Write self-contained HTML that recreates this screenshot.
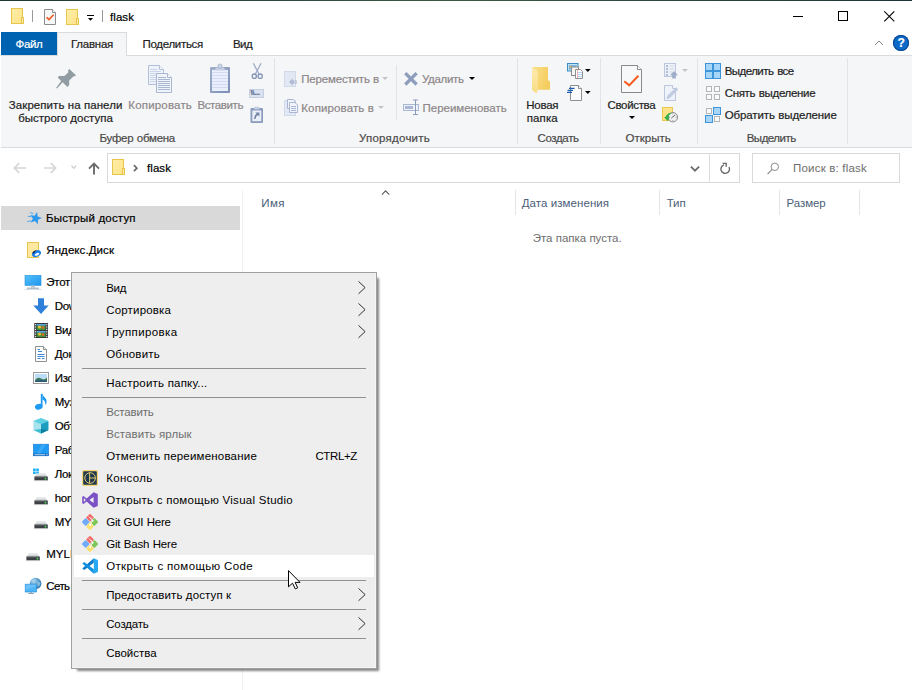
<!DOCTYPE html>
<html lang="ru"><head><meta charset="utf-8"><title>flask</title>
<style>
html,body{margin:0;padding:0;background:#fff;overflow:hidden}
body{width:912px;height:690px;position:relative;font-family:"Liberation Sans",sans-serif;font-size:12px;color:#000}
.t{position:absolute;white-space:nowrap;line-height:14px;font-size:12px;-webkit-text-stroke:0.2px}
.a{position:absolute}
svg{position:absolute;overflow:visible}
</style></head><body>
<!-- window chrome -->
<div class="a" style="left:0;top:0;width:912px;height:1px;background:linear-gradient(90deg,#1e3834,#2c4a3c 30%,#3a5a45 50%,#2a473c 75%,#1b3638)"></div>
<!-- tabs row -->
<div class="a" style="left:1px;top:32px;width:56px;height:23px;background:#0063b1"></div>
<div class="a" style="left:1px;top:55px;width:911px;height:1px;background:#dadbdc"></div>
<div class="a" style="left:57px;top:32px;width:70px;height:24px;background:#f5f6f7;border:1px solid #dadbdc;border-bottom:none;box-sizing:border-box"></div>
<!-- ribbon -->
<div class="a" style="left:1px;top:56px;width:911px;height:91px;background:#f5f6f7"></div>
<div class="a" style="left:1px;top:147px;width:911px;height:1px;background:#dadbdc"></div>
<!-- group separators -->
<div class="a" style="left:274px;top:58px;width:1px;height:86px;background:#e2e3e4"></div>
<div class="a" style="left:396px;top:65px;width:1px;height:55px;background:#e2e3e4"></div>
<div class="a" style="left:517px;top:58px;width:1px;height:86px;background:#e2e3e4"></div>
<div class="a" style="left:600px;top:58px;width:1px;height:86px;background:#e2e3e4"></div>
<div class="a" style="left:697px;top:58px;width:1px;height:86px;background:#e2e3e4"></div>
<div class="a" style="left:847px;top:58px;width:1px;height:86px;background:#e2e3e4"></div>
<!-- pin -->
<svg style="left:50px;top:62px" width="34" height="32" viewBox="50 62 34 32">
<path d="M69.3 69L76.2 75.6L73.4 76.6L69.2 80.6L69.2 85L67.4 87L62.6 82.2L57 88.6L56.2 87.8L61.2 81L57.8 77.6L59 76L64.4 76L68.2 72.4L68.2 70.2Z" fill="#929da3"/>
</svg>
<!-- copy -->
<svg style="left:147px;top:64px" width="26" height="30" viewBox="147 64 26 30">
<path d="M148.5 65.5H159.500L163.5 69.500V84.5H148.5Z" fill="#edf2fb" stroke="#b1bfd9"/>
<path d="M159.500 65.5V69.500H163.5" fill="#f6f9fe" stroke="#b1bfd9"/>
<path d="M150 69.5H157M150 71.5H161M150 73.5H161M150 75.5H161M150 77.5H161M150 79.5H161M150 81.5H161" stroke="#cdd6e8" stroke-width="1"/>
<path d="M156.5 73.5H167.500L171.5 77.500V92.5H156.5Z" fill="#eef3fc" stroke="#a9b7d3"/>
<path d="M167.500 73.5V77.500H171.5" fill="#f6f9fe" stroke="#a9b7d3"/>
<path d="M158 77.5H166M158 79.5H170M158 81.5H170M158 83.5H170M158 85.5H170M158 87.5H170M158 89.5H170" stroke="#a9b6d0" stroke-width="1"/>
</svg>
<!-- paste -->
<svg style="left:209px;top:63px" width="22" height="31" viewBox="209 63 22 31">
<defs><linearGradient id="pb" x1="0" y1="0" x2="1" y2="1"><stop offset="0" stop-color="#a2b0cd"/><stop offset="1" stop-color="#7b8eb5"/></linearGradient></defs>
<rect x="210" y="67" width="20" height="26" rx="1" fill="url(#pb)"/>
<rect x="212" y="70" width="16" height="21" fill="#e9effc"/>
<path d="M212 72.500H228M212 75.500H228M212 78.500H228M212 81.500H228M212 84.500H228M212 87.500H228" stroke="#d2dbf0" stroke-width="1"/>
<path d="M213.800 70.600L216.500 67.600H223.500L226.200 70.600Z" fill="#c5cfe4"/>
<rect x="218" y="64.200" width="4" height="4" rx="1.500" fill="#cdd6e8" stroke="#9eacc9" stroke-width="0.800"/>
</svg>
<!-- scissors -->
<svg style="left:250px;top:62px" width="15" height="18" viewBox="250 62 15 18">
<path d="M253.300 63.200L259 74M261 63.200L255.400 74" stroke="#9dabc7" stroke-width="1.300" fill="none"/>
<ellipse cx="254.300" cy="76.200" rx="2.100" ry="2.200" fill="none" stroke="#8495b8" stroke-width="1.300"/>
<ellipse cx="260.200" cy="76.200" rx="2.100" ry="2.200" fill="none" stroke="#8495b8" stroke-width="1.300"/>
</svg>
<!-- copy path -->
<div class="a" style="left:249px;top:89px;width:15px;height:9px;background:#dae1ef;border:1px solid #c6cfe2;box-sizing:border-box"></div>
<span class="t" style="left:250.5px;top:87.5px;font-size:8px;line-height:10px;color:#5c6d92;font-weight:bold;letter-spacing:-0.4px">\\...</span>
<!-- paste shortcut -->
<svg style="left:250px;top:106px" width="14" height="18" viewBox="250 106 14 18">
<rect x="250.5" y="108" width="12.5" height="15" rx="1" fill="#8b9bbd"/>
<rect x="252.3" y="110.5" width="9" height="10.7" fill="#e9eef7"/>
<rect x="254" y="106.8" width="5.5" height="2.6" rx="1" fill="#c3cde2"/>
<path d="M255.400 112.400H259.400V116.400Z" fill="#7383a6"/><path d="M257.800 114Q254.800 115.400 254.800 118.900" stroke="#7383a6" stroke-width="1.600" fill="none"/>
</svg>
<!-- move to -->
<svg style="left:284px;top:71px" width="14" height="16" viewBox="284 71 14 16">
<rect x="284.5" y="71.5" width="11" height="15" fill="#e3e9f4" stroke="#d2daea"/>
<path d="M296.8 80.2V83.8H292.6V85.8L289 82L292.6 78.2V80.2Z" fill="#aebbd3"/>
<path d="M294.5 80.2V83.8M296 80.2V83.8" stroke="#e3e9f4" stroke-width="0.6"/>
</svg>
<svg style="left:382px;top:77px" width="6" height="4" viewBox="0 0 6 4"><path d="M0 0H6L3 3Z" fill="#c3c3c3"/></svg>
<!-- copy to -->
<svg style="left:284px;top:99px" width="14" height="17" viewBox="284 99 14 17">
<rect x="284.5" y="100.5" width="11" height="15" fill="#e3e9f4" stroke="#d2daea"/>
<path d="M287.5 99.5H293.2L295.5 101.8V108.5H287.5Z" fill="#f1f4fa" stroke="#a9b7d3"/>
<path d="M289.5 102.5H295L297.5 105V112.500H289.5Z" fill="#f1f4fa" stroke="#a9b7d3"/>
<path d="M291 106.5H296M291 108.5H296M291 110.5H296" stroke="#a9b6d0"/>
</svg>
<svg style="left:377.500px;top:106px" width="6" height="4" viewBox="0 0 6 4"><path d="M0 0H6L3 3Z" fill="#c3c3c3"/></svg>
<!-- delete X -->
<svg style="left:403px;top:71px" width="16" height="16" viewBox="403 71 16 16">
<path d="M405.300 73.200L416.600 84.500M416.600 73.200L405.300 84.500" stroke="#8d9dbd" stroke-width="3.300" fill="none"/>
</svg>
<svg style="left:468.700px;top:77px" width="6" height="4" viewBox="0 0 6 4"><path d="M0 0H6L3 3Z" fill="#000"/></svg>
<!-- rename -->
<svg style="left:403px;top:99px" width="17" height="17" viewBox="403 99 17 17">
<rect x="403.500" y="104.500" width="15" height="6" fill="#eef2f9" stroke="#a9b7d3"/>
<rect x="405" y="106" width="8" height="3" fill="#a9b7d3"/>
<path d="M415.500 100V114.500M413 100H418M413 114.500H418" stroke="#8b9bbd" stroke-width="1" fill="none"/>
</svg>
<!-- new folder -->
<svg style="left:531px;top:66px" width="20" height="28" viewBox="531 66 20 28">
<defs><linearGradient id="nf" x1="0" y1="0" x2="1" y2="0.300"><stop offset="0" stop-color="#fbe08c"/><stop offset="1" stop-color="#f4cd5f"/></linearGradient>
<linearGradient id="nf2" x1="0" y1="0" x2="0" y2="1"><stop offset="0" stop-color="#fdebb0"/><stop offset="1" stop-color="#f9dc85"/></linearGradient></defs>
<path d="M532 67H548V80L550 81.800V89.800H536Z" fill="url(#nf)"/>
<path d="M532 67L537.800 71.500V89.800L536.500 93.600L532 90Z" fill="url(#nf2)"/>
</svg>
<!-- new item -->
<svg style="left:567px;top:62px" width="17" height="18" viewBox="567 62 17 18">
<rect x="567.500" y="63.500" width="10.500" height="7.500" fill="#bfe0f5" stroke="#3f8cc0"/>
<rect x="569" y="65" width="7.500" height="4.500" fill="#7fb4dc"/>
<circle cx="570.800" cy="66.800" r="1" fill="#e4b04a"/>
<rect x="571.500" y="67" width="7" height="8.500" fill="#f5f5f5" stroke="#8e8e8e"/>
<path d="M575.500 69.500H580.500L582.500 71.500V78.500H575.500Z" fill="#fff" stroke="#8e8e8e"/>
<path d="M577 72.500H582M577 74.500H582M577 76.500H582" stroke="#a9cdf3" stroke-width="0.900"/>
<path d="M577.600 70V78" stroke="#f29a9a" stroke-width="0.800"/>
</svg>
<svg style="left:585px;top:69px" width="6" height="4" viewBox="0 0 6 4"><path d="M0 0H5.600L2.800 3Z" fill="#000"/></svg>
<!-- easy access -->
<svg style="left:566px;top:84px" width="17" height="17" viewBox="566 84 17 17">
<path d="M570.500 85.500H578.500L581.500 88.500V100.500H570.500Z" fill="#fbfbfb" stroke="#8e8e8e"/>
<path d="M578.500 85.500V88.500H581.500" fill="#fff" stroke="#8e8e8e"/>
<path d="M569 88.300H574.600M567.600 90.300H573M567 92.300H572" stroke="#1c5fb5" stroke-width="1.200"/>
</svg>
<svg style="left:585px;top:91px" width="6" height="4" viewBox="0 0 6 4"><path d="M0 0H5.600L2.800 3Z" fill="#000"/></svg>
<!-- properties -->
<svg style="left:621px;top:64px" width="22" height="30" viewBox="621 64 22 30">
<path d="M621.500 65.500H637.500L641.500 69.500V92.500H621.500Z" fill="#f7f8fa" stroke="#8a8a8a"/>
<path d="M637.500 65.500V69.500H641.500" fill="#fff" stroke="#8a8a8a"/>
<path d="M624.300 81.200L629.200 85.400L638.400 75.800" fill="none" stroke="#f55d1e" stroke-width="2.100"/>
</svg>
<svg style="left:628.500px;top:116px" width="6" height="4" viewBox="0 0 6 4"><path d="M0 0H6L3 3Z" fill="#000"/></svg>
<!-- open -->
<svg style="left:664px;top:63px" width="14" height="16" viewBox="664 63 14 16">
<rect x="664.500" y="63.500" width="11" height="13" fill="#edf1f8" stroke="#bcc7dd"/>
<path d="M666 66H668M666 69H668M666 72H668M666 75H668" stroke="#9fadca" stroke-width="1.400"/>
<path d="M669.500 66H674M669.500 69H674M669.500 72H672" stroke="#cfd7e7" stroke-width="1"/>
<path d="M674 71L678 75.200H675.800V78.500H672.200V75.200H670Z" fill="#9fadca"/>
</svg>
<svg style="left:681.500px;top:69px" width="6" height="4" viewBox="0 0 6 4"><path d="M0 0H6L3 3Z" fill="#c3c3c3"/></svg>
<!-- edit -->
<svg style="left:664px;top:85px" width="15" height="16" viewBox="664 85 15 16">
<path d="M664.500 85.500H672.500L675.500 88.500V100.500H664.500Z" fill="#eef2f9" stroke="#bcc7dd"/>
<path d="M672.500 85.500V88.500H675.500" fill="#fff" stroke="#bcc7dd"/>
<path d="M667 98.500L668 95.500L676.200 87.800L677.800 89.400L669.800 97.600Z" fill="#c5cfe3" stroke="#a9b7d3" stroke-width="0.600"/>
</svg>
<!-- history -->
<svg style="left:662px;top:106px" width="17" height="18" viewBox="662 106 17 18">
<rect x="662.500" y="107.500" width="10" height="13" fill="#fce289" stroke="#ecc851"/>
<circle cx="672.900" cy="117.200" r="4.700" fill="#efefef" stroke="#8c8c8c" stroke-width="1"/>
<path d="M672.900 113.400V114.300M672.900 120.100V121M669.100 117.200H670M675.800 117.200H676.700" stroke="#777" stroke-width="0.700"/>
<path d="M671.300 118.200L673 116.600L675.200 115.200" stroke="#444" stroke-width="0.800" fill="none"/>
<path d="M664.200 117.600L668 121.200L669.400 116.400L668 117.200Q668.800 114.400 672 113.200Q667.600 112.400 665.800 116.600Z" fill="#35b04a"/>
</svg>
<!-- select all -->
<svg style="left:705px;top:63px" width="16" height="16" viewBox="0 0 16 16">
<g fill="#a6d5f7" stroke="#3c94dd"><rect x="0.500" y="0.500" width="7" height="7"/><rect x="8.500" y="0.500" width="7" height="7"/><rect x="0.500" y="8.500" width="7" height="7"/><rect x="8.500" y="8.500" width="7" height="7"/></g>
<rect x="0.500" y="0.500" width="15" height="15" fill="none" stroke="#3c94dd"/>
</svg>
<!-- select none -->
<svg style="left:705px;top:85px" width="16" height="16" viewBox="0 0 16 16">
<g fill="#fbfbfb" stroke="#b5b5b5"><rect x="1.500" y="1.500" width="5" height="5"/><rect x="9.500" y="1.500" width="5" height="5"/><rect x="1.500" y="9.500" width="5" height="5"/><rect x="9.500" y="9.500" width="5" height="5"/></g>
</svg>
<!-- invert -->
<svg style="left:705px;top:107px" width="16" height="16" viewBox="0 0 16 16">
<g fill="#fbfbfb" stroke="#b5b5b5"><rect x="1.500" y="1.500" width="5" height="5"/><rect x="9.500" y="9.500" width="5" height="5"/></g>
<g fill="#a6d5f7" stroke="#3c94dd"><rect x="8.500" y="0.500" width="7" height="7"/><rect x="0.500" y="8.500" width="7" height="7"/></g>
</svg>

<!-- title bar icons -->
<svg style="left:11px;top:8px" width="14" height="17" viewBox="0 0 14 17">
<defs><linearGradient id="fg" x1="0" y1="0" x2="1" y2="1"><stop offset="0" stop-color="#ffeea6"/><stop offset="1" stop-color="#ffe38a"/></linearGradient></defs>
<rect x="0.5" y="0.5" width="11" height="15" fill="url(#fg)" stroke="#e8c64e"/>
<rect x="10.5" y="9.5" width="2" height="6" fill="#ffe9a0" stroke="#e8c64e"/>
</svg>
<div class="a" style="left:32px;top:10px;width:1px;height:12px;background:#9a9a9a"></div>
<svg style="left:44px;top:9px" width="13" height="16" viewBox="0 0 13 16">
<path d="M0.5 0.5H8.5L11.5 3.5V15.5H0.5Z" fill="#f6f7f9" stroke="#8c8c8c"/>
<path d="M8.5 0.5V3.5H11.5" fill="#fff" stroke="#8c8c8c"/>
<path d="M2.6 8.2L5 10.6L9.6 5.8" fill="none" stroke="#f0561d" stroke-width="1.6"/>
</svg>
<svg style="left:66px;top:9px" width="14" height="17" viewBox="0 0 14 17">
<rect x="0.5" y="0.5" width="11" height="15" fill="url(#fg)" stroke="#e8c64e"/>
<rect x="10.5" y="9.5" width="2" height="6" fill="#ffe9a0" stroke="#e8c64e"/>
</svg>
<svg style="left:87px;top:15px" width="8" height="7" viewBox="0 0 8 7">
<rect x="0" y="0" width="7" height="1" fill="#000"/><path d="M1 3H6L3.5 5.8Z" fill="#000"/>
</svg>
<div class="a" style="left:102px;top:10px;width:1px;height:12px;background:#9a9a9a"></div>
<!-- window controls -->
<div class="a" style="left:793px;top:16px;width:10px;height:1px;background:#000"></div>
<div class="a" style="left:838px;top:11px;width:10px;height:10px;border:1px solid #000;box-sizing:border-box"></div>
<svg style="left:884px;top:11px" width="11" height="11" viewBox="0 0 11 11"><path d="M0.3 0.3L10.3 10.3M10.3 0.3L0.3 10.3" stroke="#000" stroke-width="1.1" fill="none"/></svg>
<!-- ribbon collapse + help -->
<svg style="left:874px;top:39px" width="10" height="7" viewBox="0 0 10 7"><path d="M1 6L5 2L9 6" stroke="#868686" stroke-width="1" fill="none"/></svg>
<div class="a" style="left:893px;top:35px;width:16px;height:16px;border-radius:8px;background:#0c69c6;box-shadow:inset 0 0 0 1px #0a4690"></div>
<span class="t" style="left:897.5px;top:36px;color:#fff;font-weight:bold;font-size:12px">?</span>

<!-- nav arrows -->
<svg style="left:13px;top:162px" width="14" height="12" viewBox="0 0 14 12"><path d="M13 6H2M6.200 1.200L1.400 6L6.200 10.800" stroke="#d6d6d6" stroke-width="1.700" fill="none"/></svg>
<svg style="left:43px;top:162px" width="14" height="12" viewBox="0 0 14 12"><path d="M1 6H12M7.800 1.200L12.600 6L7.800 10.800" stroke="#d6d6d6" stroke-width="1.700" fill="none"/></svg>
<svg style="left:71px;top:165px" width="6" height="5" viewBox="0 0 6 5"><path d="M0.500 0.800L2.800 3.200L5.100 0.800" stroke="#d0d0d0" stroke-width="1.300" fill="none"/></svg>
<svg style="left:88px;top:162px" width="12" height="13" viewBox="0 0 12 13"><path d="M6 12.400V2M1 6.600L6 1.600L11 6.600" stroke="#6a6a6a" stroke-width="1.900" fill="none"/></svg>
<!-- address box -->
<div class="a" style="left:107px;top:153px;width:633px;height:30px;border:1px solid #d9d9d9;box-sizing:border-box;background:#fff"></div>
<div class="a" style="left:709px;top:154px;width:1px;height:28px;background:#dcdcdc"></div>
<svg style="left:112px;top:159px" width="14" height="17" viewBox="0 0 14 17">
<rect x="0.500" y="0.500" width="11" height="15" fill="url(#fg)" stroke="#e8c64e"/>
<rect x="10.500" y="9.500" width="2" height="6" fill="#ffe9a0" stroke="#e8c64e"/>
</svg>
<svg style="left:133px;top:164px" width="5" height="8" viewBox="0 0 5 8"><path d="M0.900 1.200L3.900 4.200L0.900 7.200" stroke="#6a6a6a" stroke-width="1.700" fill="none"/></svg>
<svg style="left:690px;top:165px" width="10" height="7" viewBox="0 0 10 7"><path d="M0.900 1.600L5 5.700L9.100 1.600" stroke="#6a6a6a" stroke-width="1.800" fill="none"/></svg>
<svg style="left:719px;top:162px" width="12" height="13" viewBox="719 162 12 13">
<path d="M729 167A4.300 4.300 0 1 1 724 164.900" stroke="#6a6a6a" stroke-width="1.400" fill="none"/>
<path d="M722.600 163.400H726.200V166.800" stroke="#6a6a6a" stroke-width="1.400" fill="none"/>
</svg>
<!-- search box -->
<div class="a" style="left:752px;top:153px;width:148px;height:30px;border:1px solid #d9d9d9;box-sizing:border-box;background:#fff"></div>
<svg style="left:767px;top:162px" width="13" height="13" viewBox="0 0 13 13"><circle cx="7.800" cy="4.800" r="3.700" stroke="#8a8a8a" stroke-width="1" fill="none"/><path d="M5.200 7.400L0.600 12" stroke="#8a8a8a" stroke-width="1.100"/></svg>

<!-- nav/content divider -->
<div class="a" style="left:242px;top:190px;width:1px;height:500px;background:#f2f2f2"></div>
<!-- column header separators -->
<div class="a" style="left:515px;top:190px;width:1px;height:25px;background:#e5e5e5"></div>
<div class="a" style="left:659px;top:190px;width:1px;height:25px;background:#e5e5e5"></div>
<div class="a" style="left:779px;top:190px;width:1px;height:25px;background:#e5e5e5"></div>
<div class="a" style="left:859px;top:190px;width:1px;height:25px;background:#e5e5e5"></div>
<svg style="left:381px;top:190px" width="10" height="6" viewBox="0 0 10 6"><path d="M0.900 4.600L4.600 0.900L8.300 4.600" stroke="#5a5a5a" stroke-width="1.100" fill="none"/></svg>

<!-- quick access highlight -->
<div class="a" style="left:1px;top:206px;width:239px;height:24px;background:#d9d9d9"></div>
<!-- star -->
<svg style="left:26px;top:211px" width="16" height="14" viewBox="26 211 16 14">
<path d="M37.1 212.1L37.7 216.6L42.0 217.9L37.9 219.7L38.0 224.2L34.9 220.9L30.7 222.4L32.9 218.5L30.2 214.9L34.6 215.8Z" fill="#2b98ee"/>
<path d="M33.400 213.600L30 212.600M31 216.800L27.800 216.200M31.200 220.800L27.200 221.600" stroke="#4fa9f0" stroke-width="1"/>
</svg>
<!-- yandex disk -->
<svg style="left:27px;top:242px" width="15" height="16" viewBox="27 242 15 16">
<rect x="27.500" y="242.500" width="11" height="15" fill="#ffe9a0" stroke="#e8c64e"/>
<ellipse cx="36.500" cy="253.700" rx="4.700" ry="3.100" fill="#1b7fe6" transform="rotate(-24 36.500 253.700)"/>
<path d="M32.300 253.200Q33 250.600 36.800 250.200Q34.600 251.400 34 253.400Z" fill="#10224a"/>
<ellipse cx="37" cy="254.300" rx="2.400" ry="1.200" fill="#fff" transform="rotate(-24 37 254.300)"/>
</svg>
<!-- this pc -->
<svg style="left:24px;top:275px" width="18" height="15" viewBox="24 275 18 15">
<defs><linearGradient id="pc" x1="0" y1="0" x2="1" y2="1"><stop offset="0" stop-color="#53c1fb"/><stop offset="1" stop-color="#1f95ee"/></linearGradient></defs>
<rect x="25" y="275.300" width="16" height="10.200" fill="url(#pc)" stroke="#2b90dc" stroke-width="0.600"/>
<rect x="31" y="285.500" width="4" height="2" fill="#b8c4cf"/>
<rect x="27" y="287.600" width="12" height="1.200" fill="#9fb0bf"/>
<rect x="24.600" y="289" width="16.800" height="0.800" fill="#c9d3dc"/>
</svg>
<!-- downloads -->
<svg style="left:33px;top:298px" width="16" height="16" viewBox="33 298 16 16">
<path d="M38 298.300H44V305.600H48.700L41 313.900L33.300 305.600H38Z" fill="#2f80da"/>
</svg>
<!-- video -->
<svg style="left:34px;top:323px" width="14" height="15" viewBox="34 323 14 15">
<rect x="34.200" y="323" width="13.800" height="15" fill="#3a3a3a"/>
<rect x="36.600" y="324" width="9" height="6" fill="#3f8f3a"/>
<rect x="36.600" y="331" width="9" height="6" fill="#3f8f3a"/>
<circle cx="39.500" cy="327" r="1.600" fill="#f0c030"/><circle cx="43" cy="327.600" r="1.400" fill="#e0682a"/>
<circle cx="39.500" cy="334" r="1.600" fill="#f0c030"/><circle cx="43" cy="334.600" r="1.400" fill="#e0682a"/>
<rect x="36.600" y="324" width="9" height="1.600" fill="#5a9fe0"/><rect x="36.600" y="331" width="9" height="1.600" fill="#5a9fe0"/>
<path d="M35.400 324V338M46.800 324V338" stroke="#fff" stroke-width="1" stroke-dasharray="1.200 1.200"/>
</svg>
<!-- documents -->
<svg style="left:35px;top:346px" width="12" height="16" viewBox="35 346 12 16">
<path d="M35.500 346.500H43.500L46.500 349.500V361.500H35.500Z" fill="#fdfdfd" stroke="#909090"/>
<path d="M43.500 346.500V349.500H46.500" fill="#eee" stroke="#909090"/>
<path d="M37.500 349.500H40M38 351.500H42M37.500 354.500H44.500M37.500 356.500H44.500M37.500 358.500H40.500M42 358.500H44.500" stroke="#3b86d6" stroke-width="1"/>
</svg>
<!-- pictures -->
<svg style="left:33px;top:372px" width="16" height="12" viewBox="33 372 16 12">
<rect x="33.500" y="372.500" width="15" height="11" fill="#fff" stroke="#9a9a9a"/>
<rect x="35" y="374" width="12" height="8" fill="#bcdcf5"/>
<path d="M35 380Q38 376.500 41 378.600T47 377.400V382H35Z" fill="#3e7a5a"/>
<path d="M35 381Q40 379 47 380.600V382H35Z" fill="#2c5a7a"/>
</svg>
<!-- music -->
<svg style="left:34px;top:393px" width="13" height="17" viewBox="34 393 13 17">
<rect x="40.800" y="393.800" width="1.700" height="12.400" fill="#1d9af3"/>
<path d="M42.400 393.800C42.800 396.800 46.800 397.800 46.600 402C46.500 403.400 46 404.400 45.200 405C45.700 402.200 44.600 400.200 42.400 399.400Z" fill="#1d9af3"/>
<ellipse cx="38.800" cy="406.800" rx="3.900" ry="2.800" fill="#1d9af3" transform="rotate(-15 38.800 406.800)"/>
</svg>
<!-- 3d objects -->
<svg style="left:33px;top:417px" width="16" height="17" viewBox="33 417 16 17">
<path d="M41 418L48.400 421V430L41 433.500L33.400 430V421Z" fill="#a9e3ee"/>
<path d="M41 418L48.400 421L41 424.300L33.400 421Z" fill="#5fd0e2"/>
<path d="M41 424.300L48.400 421V430L41 433.500Z" fill="#1c9dc0"/>
<path d="M41 429L48.400 430L41 433.500L33.400 430Z" fill="#2bb5cf" opacity="0.850"/>
<path d="M41 429L48.400 430L41 433.500Z" fill="#107f9f"/>
</svg>
<!-- desktop -->
<svg style="left:33px;top:444px" width="16" height="13" viewBox="33 444 16 13">
<rect x="33.400" y="444.200" width="15.200" height="11.600" fill="#1f9bf4" stroke="#1a78d0" stroke-width="0.600"/>
<path d="M42 444.500L46 444.500L40 453.600L36.500 453.600Z" fill="#4db2f8" opacity="0.600"/>
<rect x="33.400" y="453.600" width="15.200" height="2.200" fill="#1468bc"/>
<path d="M34.600 454.700H45M46 454.700H46.800M47.300 454.700H48" stroke="#fff" stroke-width="0.700"/>
</svg>
<!-- local disk C -->
<svg style="left:33px;top:468px" width="7" height="6" viewBox="0 0 7 6"><path d="M0 0.400H2.700V2.900H0ZM3.200 0.400H5.900V2.900H3.200ZM0 3.400H2.700V5.900H0ZM3.200 3.400H5.900V5.900H3.200Z" fill="#1fb0f5"/></svg>
<svg style="left:34px;top:473px" width="15" height="9" viewBox="0 0 15 9">
<path d="M0.800 3.700L2.600 0.400H11.600L13.400 3.700Z" fill="#d3d7da"/>
<path d="M2.600 0.400H11.600L12.200 1.500H2Z" fill="#eceef0"/>
<rect x="0.400" y="3.600" width="13.400" height="3.900" rx="0.600" fill="#3d4043"/>
<rect x="0.400" y="3.600" width="13.400" height="0.700" fill="#7a7f84"/>
<circle cx="11.400" cy="5.700" r="0.850" fill="#43e25c"/>
<rect x="0.800" y="7.500" width="12.600" height="0.600" fill="#d4d4d4"/>
</svg>
<!-- drive D -->
<svg style="left:34px;top:497px" width="15" height="9" viewBox="0 0 15 9">
<path d="M0.800 3.700L2.600 0.400H11.600L13.400 3.700Z" fill="#d3d7da"/>
<path d="M2.600 0.400H11.600L12.200 1.500H2Z" fill="#eceef0"/>
<rect x="0.400" y="3.600" width="13.400" height="3.900" rx="0.600" fill="#3d4043"/>
<rect x="0.400" y="3.600" width="13.400" height="0.700" fill="#7a7f84"/>
<circle cx="11.400" cy="5.700" r="0.850" fill="#43e25c"/>
<rect x="0.800" y="7.500" width="12.600" height="0.600" fill="#d4d4d4"/>
</svg>
<!-- drive E -->
<svg style="left:34px;top:521px" width="15" height="9" viewBox="0 0 15 9">
<path d="M0.800 3.700L2.600 0.400H11.600L13.400 3.700Z" fill="#d3d7da"/>
<path d="M2.600 0.400H11.600L12.200 1.500H2Z" fill="#eceef0"/>
<rect x="0.400" y="3.600" width="13.400" height="3.900" rx="0.600" fill="#3d4043"/>
<rect x="0.400" y="3.600" width="13.400" height="0.700" fill="#7a7f84"/>
<circle cx="11.400" cy="5.700" r="0.850" fill="#43e25c"/>
<rect x="0.800" y="7.500" width="12.600" height="0.600" fill="#d4d4d4"/>
</svg>
<!-- MYLINUX root -->
<svg style="left:26px;top:553px" width="15" height="9" viewBox="0 0 15 9">
<path d="M0.800 3.700L2.600 0.400H11.600L13.400 3.700Z" fill="#d3d7da"/>
<path d="M2.600 0.400H11.600L12.200 1.500H2Z" fill="#eceef0"/>
<rect x="0.400" y="3.600" width="13.400" height="3.900" rx="0.600" fill="#3d4043"/>
<rect x="0.400" y="3.600" width="13.400" height="0.700" fill="#7a7f84"/>
<circle cx="11.400" cy="5.700" r="0.850" fill="#43e25c"/>
<rect x="0.800" y="7.500" width="12.600" height="0.600" fill="#d4d4d4"/>
</svg>
<!-- network -->
<svg style="left:24px;top:577px" width="18" height="18" viewBox="24 577 18 18">
<defs><radialGradient id="gl" cx="0.350" cy="0.300" r="0.800"><stop offset="0" stop-color="#b5dcf2"/><stop offset="0.450" stop-color="#5a9fd0"/><stop offset="1" stop-color="#2f6fa8"/></radialGradient></defs>
<circle cx="35.600" cy="583.500" r="5.800" fill="url(#gl)"/>
<path d="M31.500 580.500Q34 578.600 36.500 579.400Q35 581.500 33 582Q32 582.800 31 582.200ZM37.500 581Q39.500 581.500 40.500 583.500Q39.500 586 38 586.500Q37 584 37.500 581Z" fill="#9fd0ea" opacity="0.700"/>
<rect x="25.200" y="584.200" width="11.400" height="7.800" fill="#4db4f5" stroke="#2b8fdc" stroke-width="0.700"/>
<path d="M25.600 584.600H36.200V586L25.600 590Z" fill="#7fcaf9" opacity="0.600"/>
<rect x="30" y="592.200" width="2" height="1" fill="#8aa0b4"/>
<rect x="28" y="593.100" width="6" height="0.900" fill="#8aa0b4"/>
</svg>

<span class="t" style="left:110px;top:10.18px;color:#000;font-size:11.5px;letter-spacing:0.069px;">flask</span>
<span class="t" style="left:15.6px;top:37.18px;color:#fff;font-size:11.5px;letter-spacing:-0.420px;">Файл</span>
<span class="t" style="left:71px;top:37.18px;color:#1e1e1e;font-size:11.5px;letter-spacing:-0.254px;">Главная</span>
<span class="t" style="left:142.5px;top:37.18px;color:#1e1e1e;font-size:11.5px;letter-spacing:-0.302px;">Поделиться</span>
<span class="t" style="left:233px;top:37.18px;color:#1e1e1e;font-size:11.5px;letter-spacing:-0.604px;">Вид</span>
<span class="t" style="left:8.8px;top:98.18px;color:#1e1e1e;font-size:11.5px;letter-spacing:0.071px;">Закрепить на панели</span>
<span class="t" style="left:18.3px;top:110.68px;color:#1e1e1e;font-size:11.5px;letter-spacing:-0.023px;word-spacing:0.047px;">быстрого доступа</span>
<span class="t" style="left:128.3px;top:98.18px;color:#8d8789;font-size:11.5px;letter-spacing:0.178px;">Копировать</span>
<span class="t" style="left:197.5px;top:98.18px;color:#8d8789;font-size:11.5px;letter-spacing:-0.406px;">Вставить</span>
<span class="t" style="left:99.5px;top:131.18px;color:#4a4a4a;font-size:11.5px;letter-spacing:-0.266px;word-spacing:0.531px;">Буфер обмена</span>
<span class="t" style="left:301.3px;top:72.18px;color:#8d8789;font-size:11.5px;letter-spacing:-0.188px;word-spacing:0.376px;">Переместить в</span>
<span class="t" style="left:301.3px;top:101.18px;color:#8d8789;font-size:11.5px;letter-spacing:0.122px;">Копировать в</span>
<span class="t" style="left:422px;top:72.18px;color:#8d8789;font-size:11.5px;letter-spacing:-0.315px;">Удалить</span>
<span class="t" style="left:422.5px;top:101.18px;color:#8d8789;font-size:11.5px;letter-spacing:-0.009px;">Переименовать</span>
<span class="t" style="left:359px;top:131.18px;color:#4a4a4a;font-size:11.5px;letter-spacing:0.233px;">Упорядочить</span>
<span class="t" style="left:526.3px;top:98.18px;color:#1e1e1e;font-size:11.5px;letter-spacing:-0.263px;">Новая</span>
<span class="t" style="left:526.7px;top:110.68px;color:#1e1e1e;font-size:11.5px;letter-spacing:0.114px;">папка</span>
<span class="t" style="left:537.5px;top:131.18px;color:#4a4a4a;font-size:11.5px;letter-spacing:-0.360px;">Создать</span>
<span class="t" style="left:607.5px;top:98.18px;color:#1e1e1e;font-size:11.5px;letter-spacing:-0.338px;">Свойства</span>
<span class="t" style="left:625.5px;top:131.18px;color:#4a4a4a;font-size:11.5px;letter-spacing:0.018px;">Открыть</span>
<span class="t" style="left:724.7px;top:64.18px;color:#1e1e1e;font-size:11.5px;letter-spacing:-0.537px;word-spacing:1.075px;">Выделить все</span>
<span class="t" style="left:724.7px;top:86.18px;color:#1e1e1e;font-size:11.5px;letter-spacing:-0.317px;word-spacing:0.634px;">Снять выделение</span>
<span class="t" style="left:724.7px;top:108.18px;color:#1e1e1e;font-size:11.5px;letter-spacing:-0.100px;word-spacing:0.199px;">Обратить выделение</span>
<span class="t" style="left:746.7px;top:131.18px;color:#4a4a4a;font-size:11.5px;letter-spacing:-0.495px;">Выделить</span>
<span class="t" style="left:147px;top:161.18px;color:#000;font-size:11.5px;letter-spacing:0.069px;">flask</span>
<span class="t" style="left:793px;top:161.18px;color:#6d6d6d;font-size:11.5px;letter-spacing:0.199px;-webkit-text-stroke:0;">Поиск в: flask</span>
<span class="t" style="left:261.2px;top:196.18px;color:#4c607a;font-size:11.5px;letter-spacing:0.465px;-webkit-text-stroke:0;">Имя</span>
<span class="t" style="left:521.7px;top:196.18px;color:#4c607a;font-size:11.5px;letter-spacing:0.077px;-webkit-text-stroke:0;">Дата изменения</span>
<span class="t" style="left:666.7px;top:196.18px;color:#4c607a;font-size:11.5px;letter-spacing:-0.124px;-webkit-text-stroke:0;">Тип</span>
<span class="t" style="left:786.5px;top:196.18px;color:#4c607a;font-size:11.5px;letter-spacing:-0.055px;-webkit-text-stroke:0;">Размер</span>
<span class="t" style="left:532.7px;top:231.18px;color:#6d6d6d;font-size:11.5px;letter-spacing:-0.004px;word-spacing:0.008px;-webkit-text-stroke:0;">Эта папка пуста.</span>
<span class="t" style="left:46px;top:211.18px;color:#000;font-size:11.5px;letter-spacing:0.168px;">Быстрый доступ</span>
<span class="t" style="left:46.3px;top:243.18px;color:#000;font-size:11.5px;letter-spacing:0.075px;">Яндекс.Диск</span>
<span class="t" style="left:46.3px;top:275.18px;color:#000;font-size:11.5px;letter-spacing:-0.257px;">Этот компьютер</span>
<span class="t" style="left:54.7px;top:299.18px;color:#000;font-size:11.5px;letter-spacing:-0.3px;">Downloads</span>
<span class="t" style="left:54.7px;top:323.18px;color:#000;font-size:11.5px;letter-spacing:-0.3px;">Видео</span>
<span class="t" style="left:54.7px;top:347.18px;color:#000;font-size:11.5px;letter-spacing:-0.3px;">Документы</span>
<span class="t" style="left:54.7px;top:371.18px;color:#000;font-size:11.5px;letter-spacing:-0.3px;">Изображения</span>
<span class="t" style="left:54.7px;top:395.18px;color:#000;font-size:11.5px;letter-spacing:-0.3px;">Музыка</span>
<span class="t" style="left:54.7px;top:419.18px;color:#000;font-size:11.5px;letter-spacing:-0.3px;">Объемные объекты</span>
<span class="t" style="left:54.7px;top:443.18px;color:#000;font-size:11.5px;letter-spacing:-0.3px;">Рабочий стол</span>
<span class="t" style="left:54.7px;top:467.18px;color:#000;font-size:11.5px;letter-spacing:-0.3px;">Локальный диск (C:)</span>
<span class="t" style="left:54.7px;top:491.18px;color:#000;font-size:11.5px;letter-spacing:-0.3px;">home (D:)</span>
<span class="t" style="left:54.7px;top:515.18px;color:#000;font-size:11.5px;letter-spacing:-0.3px;">MYLINUX (E:)</span>
<span class="t" style="left:46.3px;top:547.18px;color:#000;font-size:11.5px;letter-spacing:-0.019px;">MYLINUX (E:)</span>
<span class="t" style="left:46.3px;top:579.18px;color:#000;font-size:11.5px;letter-spacing:-0.595px;">Сеть</span>
<!-- context menu -->
<div class="a" style="left:77px;top:278px;width:302px;height:393px;background:rgba(0,0,0,0.48);filter:blur(1.100px)"></div>
<div class="a" style="left:71px;top:272px;width:306px;height:397px;box-sizing:border-box;background:#eeeeee;border:1px solid #a0a0a0"></div>
<div class="a" style="left:375px;top:273px;width:1px;height:395px;background:#f4f4f4"></div>
<div class="a" style="left:72px;top:667px;width:304px;height:1px;background:#f4f4f4"></div>
<div class="a" style="left:74px;top:555px;width:300px;height:22px;background:#fff"></div>
<div class="a" style="left:82px;top:368px;width:284px;height:1px;background:#919191"></div>
<div class="a" style="left:82px;top:397px;width:284px;height:1px;background:#919191"></div>
<div class="a" style="left:82px;top:580px;width:284px;height:1px;background:#919191"></div>
<div class="a" style="left:82px;top:609px;width:284px;height:1px;background:#919191"></div>
<div class="a" style="left:82px;top:638px;width:284px;height:1px;background:#919191"></div>
<!-- submenu chevrons -->
<svg style="left:358px;top:281px" width="9" height="14" viewBox="0 0 9 14"><path d="M0.500 0.400L7.100 6.600L0.500 12.800" stroke="#2e2e2e" stroke-width="1" fill="none"/></svg>
<svg style="left:358px;top:303px" width="9" height="14" viewBox="0 0 9 14"><path d="M0.500 0.400L7.100 6.600L0.500 12.800" stroke="#2e2e2e" stroke-width="1" fill="none"/></svg>
<svg style="left:358px;top:325px" width="9" height="14" viewBox="0 0 9 14"><path d="M0.500 0.400L7.100 6.600L0.500 12.800" stroke="#2e2e2e" stroke-width="1" fill="none"/></svg>
<svg style="left:358px;top:588px" width="9" height="14" viewBox="0 0 9 14"><path d="M0.500 0.400L7.100 6.600L0.500 12.800" stroke="#2e2e2e" stroke-width="1" fill="none"/></svg>
<svg style="left:358px;top:617px" width="9" height="14" viewBox="0 0 9 14"><path d="M0.500 0.400L7.100 6.600L0.500 12.800" stroke="#2e2e2e" stroke-width="1" fill="none"/></svg>
<!-- console icon -->
<svg style="left:82px;top:470px" width="16" height="16" viewBox="0 0 16 16">
<rect x="0.600" y="0.600" width="14.800" height="14.800" rx="1.500" fill="#1f3a4e" stroke="#f7d671" stroke-width="1.200"/>
<circle cx="8.100" cy="8" r="5.300" fill="none" stroke="#f7d671" stroke-width="0.900"/>
<path d="M7.600 2.800V13.200M7.600 8H13.300" stroke="#f7d671" stroke-width="0.900" fill="none"/>
</svg>
<!-- visual studio -->
<svg style="left:82px;top:492px" width="16" height="16" viewBox="0 0 16 16">
<path d="M11.600 0.200L15.800 1.900V14.100L11.600 15.800L4.600 9.600L1.600 12L0.200 11.300V4.700L1.600 4L4.600 6.400ZM11.600 4.900L7.400 8L11.600 11.100ZM1.800 6.100V9.900L3.800 8Z" fill="#7a52c6" fill-rule="evenodd"/>
</svg>
<!-- git gui -->
<svg style="left:82px;top:514px" width="16" height="16" viewBox="0 0 16 16">
<g transform="rotate(45 8 8)">
<rect x="2.100" y="2.100" width="5.700" height="5.700" rx="0.900" fill="#f26a6a"/>
<rect x="8.200" y="2.100" width="5.700" height="5.700" rx="0.900" fill="#7fc658"/>
<rect x="2.100" y="8.200" width="5.700" height="5.700" rx="0.900" fill="#70abf9"/>
<rect x="8.200" y="8.200" width="5.700" height="5.700" rx="0.900" fill="#f9e071"/>
</g>
<path d="M7 2.600L9.400 5M8.300 3.900L10.600 6.600M10.600 6.600L8.200 11" stroke="#fff" stroke-width="0.900" fill="none" opacity="0.900"/>
<circle cx="10.600" cy="6.800" r="1" fill="#fff"/><circle cx="8.200" cy="11" r="1" fill="#fff"/>
</svg>
<!-- git bash -->
<svg style="left:82px;top:536px" width="16" height="16" viewBox="0 0 16 16">
<g transform="rotate(45 8 8)">
<rect x="2.100" y="2.100" width="5.700" height="5.700" rx="0.900" fill="#f26a6a"/>
<rect x="8.200" y="2.100" width="5.700" height="5.700" rx="0.900" fill="#7fc658"/>
<rect x="2.100" y="8.200" width="5.700" height="5.700" rx="0.900" fill="#70abf9"/>
<rect x="8.200" y="8.200" width="5.700" height="5.700" rx="0.900" fill="#f9e071"/>
</g>
<path d="M7 2.600L9.400 5M8.300 3.900L10.600 6.600M10.600 6.600L8.200 11" stroke="#fff" stroke-width="0.900" fill="none" opacity="0.900"/>
<circle cx="10.600" cy="6.800" r="1" fill="#fff"/><circle cx="8.200" cy="11" r="1" fill="#fff"/>
</svg>
<!-- vs code -->
<svg style="left:82px;top:558px" width="16" height="16" viewBox="0 0 16 16">
<path d="M11.800 0.300L11.800 4.700L2.200 12L0.300 10.500Z" fill="#0a7bcc"/>
<path d="M11.800 15.700L11.800 11.300L2.200 4L0.300 5.500Z" fill="#1290e0"/>
<path d="M11.800 0.300L15.200 1.800Q16 2.200 16 3V13Q16 13.800 15.200 14.200L11.800 15.700Z" fill="#24a9f2"/>
</svg>
<span class="t" style="left:106.2px;top:281.18px;color:#000;font-size:11.5px;letter-spacing:-0.271px;-webkit-text-stroke:0;">Вид</span>
<span class="t" style="left:106.2px;top:303.18px;color:#000;font-size:11.5px;letter-spacing:0.187px;-webkit-text-stroke:0;">Сортировка</span>
<span class="t" style="left:106.2px;top:325.18px;color:#000;font-size:11.5px;letter-spacing:0.385px;-webkit-text-stroke:0;">Группировка</span>
<span class="t" style="left:106.2px;top:347.18px;color:#000;font-size:11.5px;letter-spacing:0.215px;-webkit-text-stroke:0;">Обновить</span>
<span class="t" style="left:106.2px;top:376.18px;color:#000;font-size:11.5px;letter-spacing:0.206px;-webkit-text-stroke:0;">Настроить папку...</span>
<span class="t" style="left:106.2px;top:405.18px;color:#6d6d6d;font-size:11.5px;letter-spacing:-0.156px;-webkit-text-stroke:0;">Вставить</span>
<span class="t" style="left:106.2px;top:427.18px;color:#6d6d6d;font-size:11.5px;letter-spacing:0.094px;-webkit-text-stroke:0;">Вставить ярлык</span>
<span class="t" style="left:106.2px;top:449.18px;color:#000;font-size:11.5px;letter-spacing:0.201px;-webkit-text-stroke:0;">Отменить переименование</span>
<span class="t" style="left:315.4px;top:449.18px;color:#000;font-size:11.5px;letter-spacing:-0.380px;-webkit-text-stroke:0;">CTRL+Z</span>
<span class="t" style="left:106.2px;top:471.18px;color:#000;font-size:11.5px;letter-spacing:0.304px;-webkit-text-stroke:0;">Консоль</span>
<span class="t" style="left:106.2px;top:493.18px;color:#000;font-size:11.5px;letter-spacing:0.270px;-webkit-text-stroke:0;">Открыть с помощью Visual Studio</span>
<span class="t" style="left:106.2px;top:515.18px;color:#000;font-size:11.5px;letter-spacing:-0.246px;word-spacing:0.492px;-webkit-text-stroke:0;">Git GUI Here</span>
<span class="t" style="left:106.2px;top:537.18px;color:#000;font-size:11.5px;letter-spacing:-0.159px;word-spacing:0.319px;-webkit-text-stroke:0;">Git Bash Here</span>
<span class="t" style="left:106.2px;top:559.18px;color:#000;font-size:11.5px;letter-spacing:0.355px;-webkit-text-stroke:0;">Открыть с помощью Code</span>
<span class="t" style="left:106.2px;top:588.18px;color:#000;font-size:11.5px;letter-spacing:0.112px;-webkit-text-stroke:0;">Предоставить доступ к</span>
<span class="t" style="left:106.2px;top:617.18px;color:#000;font-size:11.5px;letter-spacing:-0.174px;-webkit-text-stroke:0;">Создать</span>
<span class="t" style="left:106.2px;top:646.18px;color:#000;font-size:11.5px;letter-spacing:-0.000px;-webkit-text-stroke:0;">Свойства</span>
<!-- mouse cursor -->
<svg style="left:287px;top:569px" width="14" height="22" viewBox="-1 -1 14 22">
<path d="M0.500 0.600V16.800L4.500 13.200L7.300 18.900L9.700 17.800L7.100 12.400H12Z" fill="#fff" stroke="#000" stroke-width="1" stroke-linejoin="miter"/>
</svg>

</body></html>
